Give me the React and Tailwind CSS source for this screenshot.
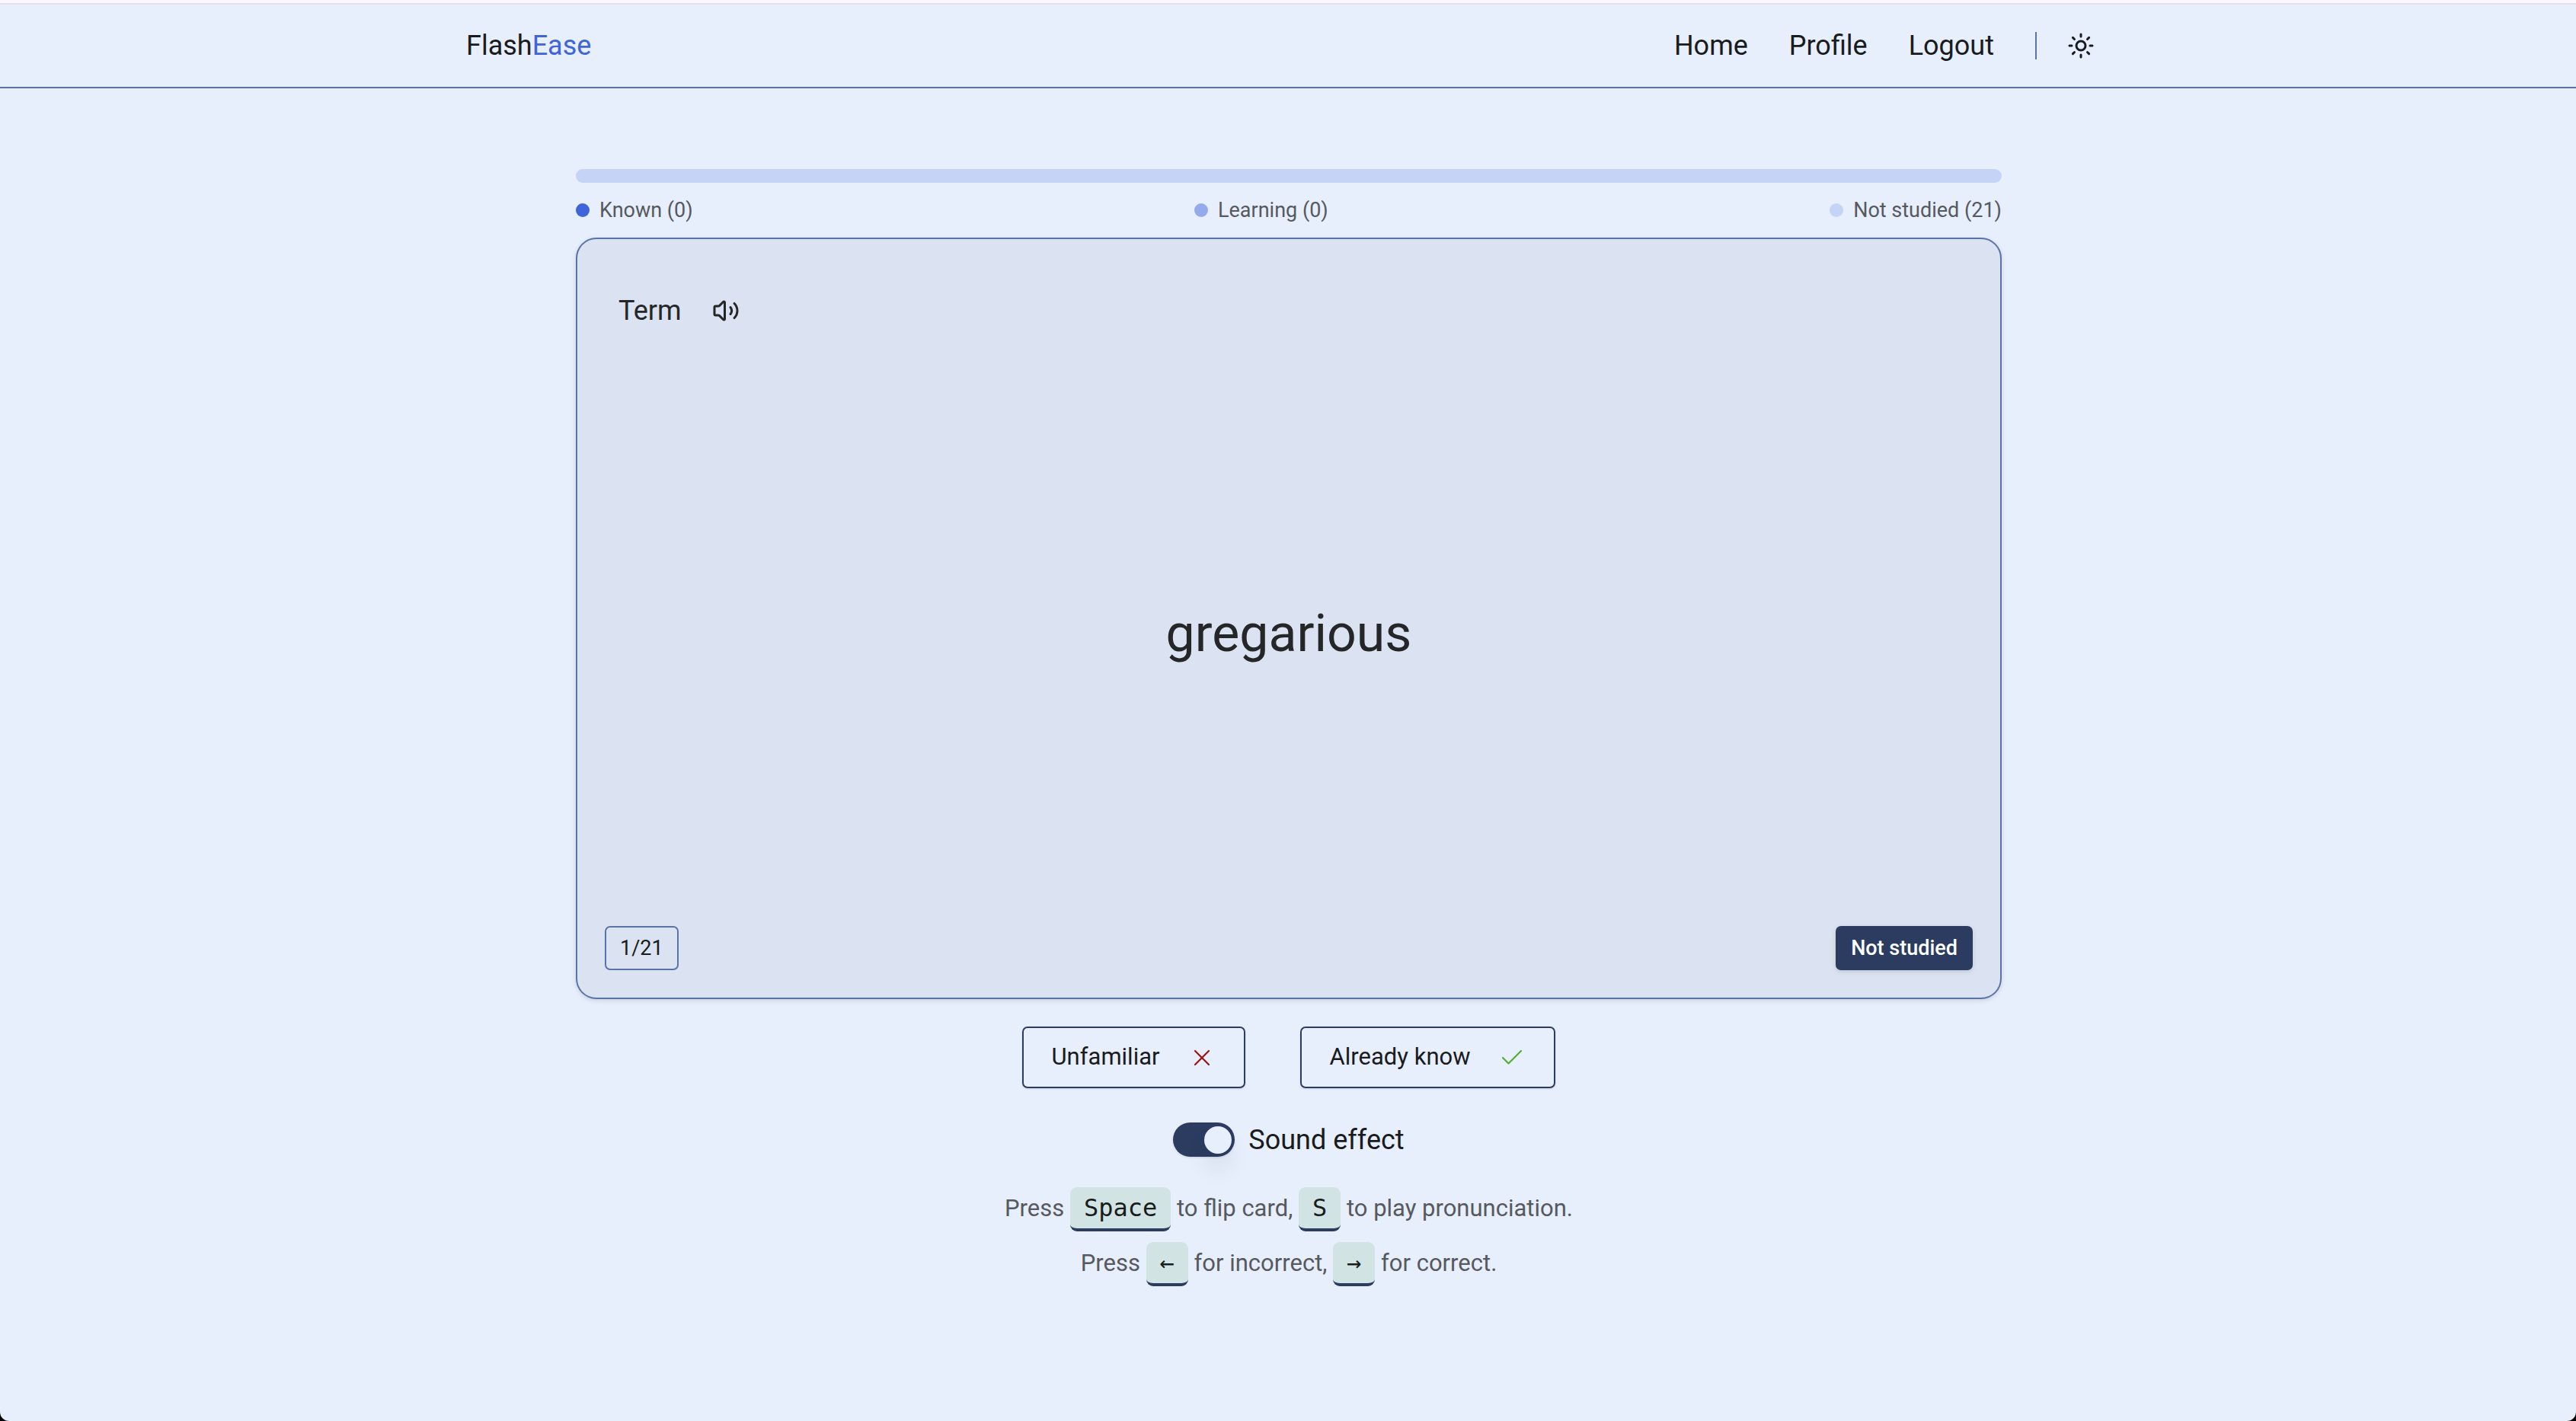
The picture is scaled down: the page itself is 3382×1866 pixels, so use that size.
import { Sun, Volume2, X, Check } from "lucide-react";

const navLinks = ["Home", "Profile", "Logout"];

const legend = [
  { label: "Known (0)", dot: "bg-[#4065db]" },
  { label: "Learning (0)", dot: "bg-[#95aaeb]" },
  { label: "Not studied (21)", dot: "bg-[#c5d3f6]" },
];

function Key({ children }) {
  return (
    <kbd className="inline-block h-[58px] rounded-[9px] border-b-4 border-[#2b3c60] bg-[#d1e4e3] px-[18px] font-['DejaVu_Sans_Mono',monospace] text-[32px] leading-[54px] text-[#191b1c]">
      {children}
    </kbd>
  );
}

function Header() {
  return (
    <header className="border-b-2 border-[#5b74a7]">
      <div className="mx-auto flex h-[108px] max-w-[2162px] items-center justify-between pl-0.5">
        <a href="#" className="text-[36px] leading-[54px]">
          Flash<span className="text-[#4065db]">Ease</span>
        </a>
        <div className="flex items-center">
          <nav className="flex gap-[54px] pr-[54px] text-[36px] leading-[54px]">
            {navLinks.map((name) => (
              <a key={name} href="#">
                {name}
              </a>
            ))}
          </nav>
          <div className="h-9 w-0.5 bg-[#5b74a7]" />
          <button type="button" aria-label="Toggle theme" className="ml-[18px] p-[22px]">
            <Sun size={36} />
          </button>
        </div>
      </div>
    </header>
  );
}

function Card() {
  return (
    <section className="flex h-[1000px] flex-col justify-between rounded-[27px] border-2 border-[#5b74a7] bg-[#dbe2f1] p-9 shadow-[0_2px_6px_rgba(0,0,0,0.12)]">
      <div className="flex items-center gap-10 px-[18px] pt-[31px] text-[36px] leading-[54px] text-[#242627]">
        Term
        <button type="button" aria-label="Play pronunciation">
          <Volume2 size={36} />
        </button>
      </div>
      <h1 className="pt-3 text-center text-[68px] leading-[80px] text-[#242627]">gregarious</h1>
      <div className="flex items-center justify-between text-[27px]">
        <span className="flex h-[58px] items-center rounded-[7px] border-2 border-[#5b74a7] px-[18px]">1/21</span>
        <span className="flex h-[58px] items-center rounded-[7px] bg-[#2b3c60] px-5 font-medium text-white shadow-[0_2px_6px_rgba(0,0,0,0.12)]">
          Not studied
        </span>
      </div>
    </section>
  );
}

export default function App() {
  return (
    <div className="bg-black">
      <div className="min-h-screen rounded-b-xl border-t-4 border-[#fcf6fd] bg-[#e7eefc] font-[Roboto,sans-serif] text-[#191b1c]">
        <div className="h-0.5 bg-[#e6deea]" />
        <Header />
        <main className="mx-auto max-w-[1874px] pt-[106px] pl-0.5">
          <div className="h-[18px] rounded-full bg-[#c5d3f6]" />
          <ul className="flex h-[72px] items-center justify-between text-[27px] leading-[36px] text-[#56595e]">
            {legend.map((item) => (
              <li key={item.label} className="flex items-center gap-[13px]">
                <span className={"size-[18px] rounded-full " + item.dot} />
                {item.label}
              </li>
            ))}
          </ul>
          <Card />
          <div className="mt-9 flex justify-center gap-[72px] text-[31px]">
            <button type="button" className="flex h-[81px] items-center gap-[37px] rounded-[7px] border-2 border-[#2b3c60] px-[37px] shadow-sm">
              Unfamiliar
              <X size={36} strokeWidth={1.5} className="text-[#9a1515]" />
            </button>
            <button type="button" className="flex h-[81px] items-center gap-[37px] rounded-[7px] border-2 border-[#2b3c60] px-[37px] shadow-sm">
              Already know
              <Check size={36} strokeWidth={1.5} className="text-[#54ad37]" />
            </button>
          </div>
          <label className="mt-[45px] flex h-[45px] items-center justify-center gap-[18px] text-[36px]">
            <input
              type="checkbox"
              role="switch"
              defaultChecked
              className="flex h-[45px] w-[81px] appearance-none items-center justify-end rounded-full bg-[#2b3c60] px-1 shadow-sm after:block after:size-9 after:rounded-full after:bg-[#e7eefc] after:shadow-[0_20px_30px_rgba(0,0,0,0.08)]"
            />
            Sound effect
          </label>
          <div className="mt-8 pb-[100px] text-center text-[31px] leading-[72px] text-[#56595e]">
            <p>
              Press <Key>Space</Key> to flip card, <Key>S</Key> to play pronunciation.
            </p>
            <p>
              Press <Key>←</Key> for incorrect, <Key>→</Key> for correct.
            </p>
          </div>
        </main>
      </div>
    </div>
  );
}
